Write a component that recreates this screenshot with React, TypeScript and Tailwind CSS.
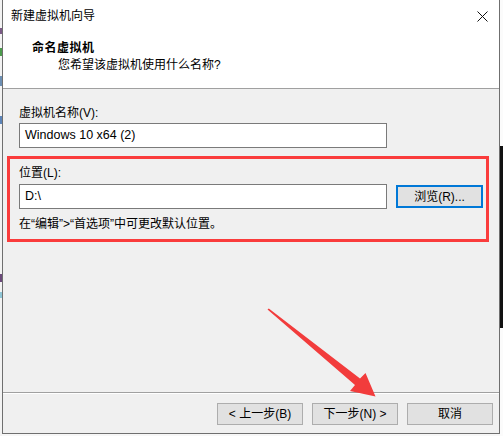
import React from "react";

const font = { fontFamily: '"Liberation Sans", "Noto Sans CJK SC", sans-serif' };

function CloseIcon() {
  return (
    <svg width="11" height="11" viewBox="0 0 11 11" className="block">
      <path d="M0.5 0.5 L10.5 10.5 M10.5 0.5 L0.5 10.5" stroke="#111" strokeWidth="1" fill="none" />
    </svg>
  );
}

function WinButton({ children }: { children: React.ReactNode }) {
  return (
    <div className="w-[86px] h-[22px] border border-[#adadad] bg-[#e1e1e1] flex items-center justify-center text-[12px] leading-none text-black">
      {children}
    </div>
  );
}

function TextField({ value }: { value: string }) {
  return (
    <div className="w-[368px] h-[25px] border border-[#7a7a7a] bg-white flex items-center pl-[5px] text-[12.5px] leading-none text-black">
      {value}
    </div>
  );
}

export default function App() {
  return (
    <div className="relative w-[503px] h-[436px] flex bg-[#f7f7f7] overflow-hidden" style={font}>
      {/* desktop behind the dialog, left edge */}
      <div className="w-[2px] h-full flex flex-col bg-[#f3f3f3]">
        <div className="h-[28px]" />
        <div className="h-[6px] bg-[#7b5a86]" />
        <div className="h-[14px]" />
        <div className="h-[8px] bg-[#4c9a4c]" />
        <div className="h-[20px]" />
        <div className="h-[10px] bg-[#6d8fb3]" />
        <div className="h-[30px]" />
        <div className="h-[8px] bg-[#5d84b8]" />
        <div className="h-[150px]" />
        <div className="h-[8px] bg-[#6b4a7a]" />
        <div className="h-[10px]" />
        <div className="h-[6px] bg-[#8fc6d6]" />
      </div>

      {/* wizard window */}
      <div className="w-[498px] h-[434px] border-l border-r border-b border-[#6f6f6f] flex flex-col">
        {/* title bar + header panel */}
        <div className="h-[89px] bg-white border-b border-[#a0a0a0] flex flex-col">
          <div className="h-[32px] flex items-center justify-between pl-[8px] pr-[8px]">
            <span className="text-[12px] leading-none text-black">新建虚拟机向导</span>
            <div className="mr-[3px]">
              <CloseIcon />
            </div>
          </div>
          <div className="pl-[29px] mt-[8px] text-[12px] leading-[16px] font-bold tracking-[0.5px] text-black">命名虚拟机</div>
          <div className="pl-[55px] mt-[1px] text-[12px] leading-[16px] text-black">
            您希望该虚拟机使用什么名称?
          </div>
        </div>

        {/* body */}
        <div className="flex-1 bg-[#f0f0f0] flex flex-col pl-[16px] pt-[16px]">
          <div className="text-[12px] leading-[16px] text-black">虚拟机名称(V):</div>
          <div className="mt-[2px]">
            <TextField value="Windows 10 x64 (2)" />
          </div>

          {/* location group */}
          <div className="relative mt-[17px] flex flex-col">
            <div className="text-[12px] leading-[16px] text-black">位置(L):</div>
            <div className="mt-[3px] flex items-center gap-[9px]">
              <TextField value="D:\" />
              <div className="w-[87px] h-[23px] border-2 border-[#0078d7] bg-[#e1e1e1] flex items-center justify-center text-[12px] leading-none text-black">
                浏览(R)...
              </div>
            </div>
            <div className="mt-[7px] text-[12px] leading-[16px] text-black">
              在“编辑”&gt;“首选项”中可更改默认位置。
            </div>
            {/* red annotation frame */}
            <div className="absolute left-[-12px] top-[-9px] w-[482px] h-[86px] border-[3px] border-[#fa3c3c] pointer-events-none" />
          </div>

          <div className="flex-1" />
        </div>

        {/* footer */}
        <div className="h-[41px] bg-[#f0f0f0] border-t border-[#a0a0a0] flex flex-col">
          <div className="h-px bg-white" />
          <div className="flex justify-end gap-[9px] pr-[6px] mt-[9px]">
            <WinButton>&lt; 上一步(B)</WinButton>
            <WinButton>下一步(N) &gt;</WinButton>
            <WinButton>取消</WinButton>
          </div>
        </div>
      </div>

      {/* desktop behind the dialog, right edge */}
      <div className="w-[3px] h-full flex flex-col bg-[#fbfbfb]">
        <div className="h-[146px]" />
        <div className="h-[182px] bg-[#111]" />
      </div>

      {/* red pointer arrow */}
      <svg className="absolute inset-0 pointer-events-none" width="503" height="436" viewBox="0 0 503 436">
        <polygon
          points="267.5,309.5 268.8,308.6 360,378.6 365.5,373 375.5,396.5 350,391 355,385.1"
          fill="#f23c3c"
        />
      </svg>
    </div>
  );
}
